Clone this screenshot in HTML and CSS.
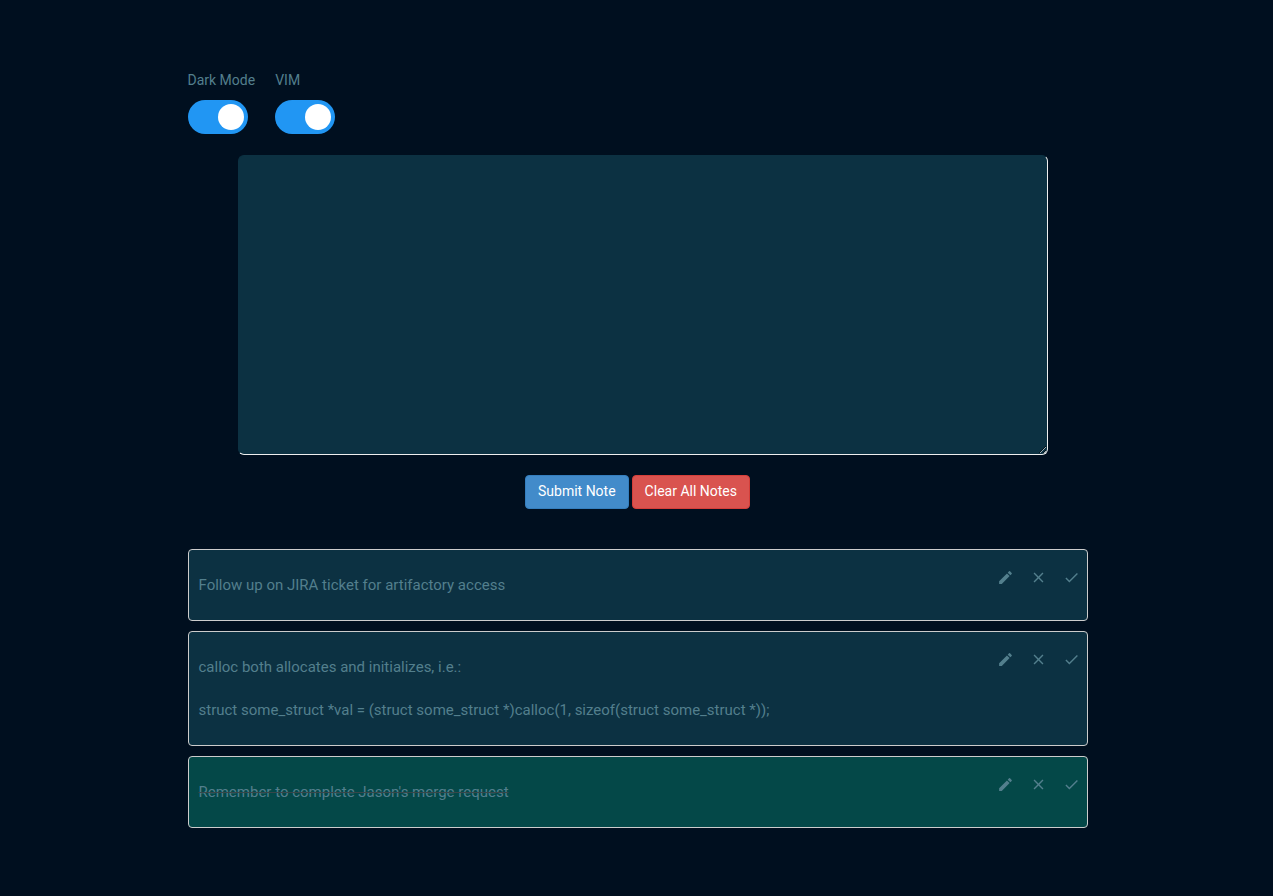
FILE: index.html
```html
<!DOCTYPE html>
<html lang="en">
<head>
<meta charset="utf-8">
<meta name="viewport" content="width=device-width, initial-scale=1">
<title>Notes</title>
<link rel="stylesheet" href="styles.css">
</head>
<body>
<svg class="sprite" aria-hidden="true">
  <symbol id="edit" viewBox="0 0 24 24"><path d="M3 17.25V21h3.75L17.81 9.94l-3.75-3.75L3 17.25zM20.71 7.04a1 1 0 0 0 0-1.41l-2.34-2.34a1 1 0 0 0-1.41 0l-1.83 1.83 3.75 3.75 1.83-1.83z"/></symbol>
  <symbol id="close" viewBox="0 0 24 24"><path d="M19 6.41 17.59 5 12 10.59 6.41 5 5 6.41 10.59 12 5 17.59 6.41 19 12 13.41 17.59 19 19 17.59 13.41 12z"/></symbol>
  <symbol id="check" viewBox="0 0 24 24"><path d="M9 16.17 4.83 12l-1.42 1.41L9 19 21 7l-1.41-1.41z"/></symbol>
</svg>
<main class="container">
  <div class="settings">
    <label class="setting">Dark Mode<input class="switch" type="checkbox" checked></label>
    <label class="setting">VIM<input class="switch" type="checkbox" checked></label>
  </div>
  <form class="editor">
    <textarea class="editor-text" aria-label="Note"></textarea>
    <div class="editor-actions">
      <button class="btn btn-primary" type="button">Submit Note</button>
      <button class="btn btn-danger" type="button">Clear All Notes</button>
    </div>
  </form>
  <section class="notes" aria-label="Notes">
    <article class="note">
      <div class="note-text"><p>Follow up on JIRA ticket for artifactory access</p></div>
      <div class="note-actions">
        <button class="icon-btn" type="button" aria-label="Edit"><svg class="icon"><use href="#edit"/></svg></button>
        <button class="icon-btn" type="button" aria-label="Delete"><svg class="icon"><use href="#close"/></svg></button>
        <button class="icon-btn" type="button" aria-label="Complete"><svg class="icon"><use href="#check"/></svg></button>
      </div>
    </article>
    <article class="note">
      <div class="note-text"><p>calloc both allocates and initializes, i.e.:</p><p>struct some_struct *val = (struct some_struct *)calloc(1, sizeof(struct some_struct *));</p></div>
      <div class="note-actions">
        <button class="icon-btn" type="button" aria-label="Edit"><svg class="icon"><use href="#edit"/></svg></button>
        <button class="icon-btn" type="button" aria-label="Delete"><svg class="icon"><use href="#close"/></svg></button>
        <button class="icon-btn" type="button" aria-label="Complete"><svg class="icon"><use href="#check"/></svg></button>
      </div>
    </article>
    <article class="note note-done">
      <div class="note-text"><p>Remember to complete Jason's merge request</p></div>
      <div class="note-actions">
        <button class="icon-btn" type="button" aria-label="Edit"><svg class="icon"><use href="#edit"/></svg></button>
        <button class="icon-btn" type="button" aria-label="Delete"><svg class="icon"><use href="#close"/></svg></button>
        <button class="icon-btn" type="button" aria-label="Complete"><svg class="icon"><use href="#check"/></svg></button>
      </div>
    </article>
  </section>
</main>
</body>
</html>
```
FILE: styles.css
```css
* { box-sizing: border-box; }
body {
  margin: 0;
  padding: 70px 0 60px 2px;
  background: #000f1f;
  color: #537f8d;
  font: 14px/20px Roboto, sans-serif;
}
.sprite { display: none; }
.container { max-width: 900px; margin: 0 auto; }
.settings { display: flex; gap: 20px; }
.setting { display: flex; flex-direction: column; gap: 10px; }
.switch {
  appearance: none;
  display: flex;
  align-items: center;
  justify-content: flex-start;
  width: 60px;
  height: 34px;
  margin: 0;
  padding: 4px;
  border-radius: 34px;
  background: #ccc;
  cursor: pointer;
}
.switch::before {
  content: "";
  width: 26px;
  height: 26px;
  border-radius: 50%;
  background: #fff;
}
.switch:checked { justify-content: flex-end; background: #2196f3; }
.editor { margin: 21px 0 40px; }
.editor-text {
  display: block;
  width: 90%;
  height: 300px;
  margin-left: 50px;
  padding: 10px;
  border: 1px solid #0c3142;
  border-right-color: #eee;
  border-bottom-color: #eee;
  border-radius: 6px;
  background: #0c3142;
  color: inherit;
  font: 15px/22px Roboto, sans-serif;
  resize: both;
}
.editor-actions {
  display: flex;
  flex-wrap: wrap;
  justify-content: center;
  gap: 3px;
  margin-top: 20px;
}
.btn {
  padding: 5px 12px 7px;
  border: 1px solid;
  border-radius: 4px;
  color: #fff;
  font: 14px/20px Roboto, sans-serif;
  cursor: pointer;
}
.btn-primary { background: #428bca; border-color: #357ebd; }
.btn-danger { background: #d9534f; border-color: #d43f3a; }
.notes { display: grid; gap: 10px; }
.note {
  display: flex;
  justify-content: space-between;
  align-items: flex-start;
  padding: 0 7px 0 10px;
  border: 1px solid #ccc;
  border-radius: 4px;
  background: #0c3142;
  font-size: 15px;
  line-height: 22px;
}
.note-text { display: grid; gap: 21px; padding: 24px 0; }
.note-text p { margin: 0; }
.note-done { background: #044848; }
.note-done p { text-decoration: line-through 1px #37464a; }
.note-actions { display: flex; gap: 16px; padding-top: 19px; }
.icon-btn {
  padding: 0;
  border: 0;
  background: none;
  color: inherit;
  cursor: pointer;
}
.icon { display: block; width: 17px; height: 17px; fill: currentColor; }
```
